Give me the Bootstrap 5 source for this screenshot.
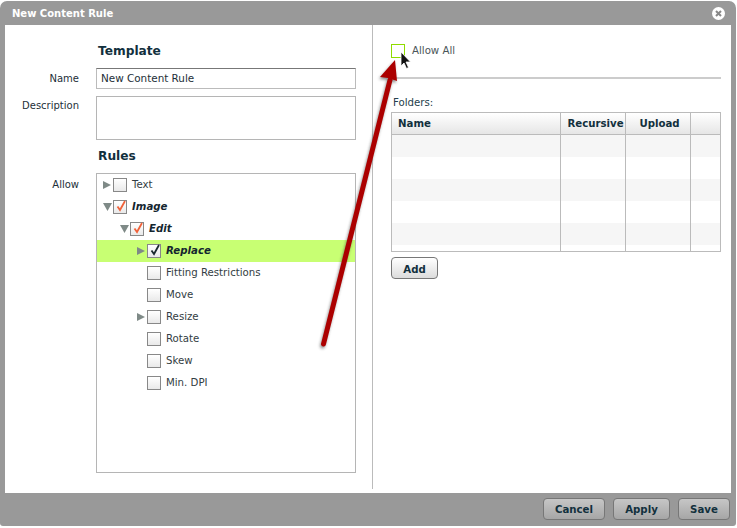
<!DOCTYPE html>
<html lang="en">
<head>
<meta charset="utf-8">
<title>New Content Rule</title>
<link href="https://cdn.jsdelivr.net/npm/bootstrap@5.3.0/dist/css/bootstrap.min.css" rel="stylesheet">
<style>
html,body{background:#fff;margin:0;height:528px;overflow:hidden}
body{font-family:"DejaVu Sans",Verdana,sans-serif;font-size:10.2px;color:#1d2f38;position:relative}
.dlg{width:736px;height:525px;margin-top:1px;background:#999;border-radius:7px 7px 3px 3px;display:flex;flex-direction:column}
.dlg-title{height:24px;padding:0 11px 0 12px;color:#fff;font-weight:700;font-size:10px}
.dlg-x{width:13px;height:13px}
.dlg-body{height:468px;margin:0 5px;background:#fff}
.pane-l{width:368px;height:464px;border-right:1px solid #bbb;padding:18px 16px 0 0}
.pane-r{width:358px;padding:19px 10px 0 18px}
.lab-col{width:91px;text-align:right;padding-right:17px;flex:none;font-size:10px}
.h-sec{font-size:12.2px;font-weight:700;color:#12303d;margin:0 0 9px 2px;padding-top:1px;line-height:15px}
.fld-gap{margin-bottom:7px}
.lab-top{padding-top:2px}
.sec-gap{margin-top:8px}
.lab-allow{padding-top:4px}
.fld{width:260px;height:21px;border:1px solid #bbb;border-top-color:#777;padding:0 4px;font-size:10.4px;color:#1d2f38;line-height:19px}
.fld-area{width:260px;height:44px;border:1px solid #b5b5b5}
.tree{width:260px;height:300px;border:1px solid #b5b5b5}
.tree-row{height:22px;color:#333d42;white-space:nowrap}
.tree-row.sel{background:#c8ff73}
.tree-row.b{font-weight:700;font-style:italic;color:#14262f}
.d1{padding-left:6px}.d2{padding-left:23px}.d3{padding-left:40px}
.tw{width:10px;height:10px;flex:none}
.cb{width:14px;height:14px;flex:none;border:1px solid #888;background:linear-gradient(#fff,#e9e9e9);margin-right:5px;position:relative}
.cb svg{position:absolute;left:1px;top:-2px}
.cb-all{border:1px solid #8fdc00;background:#fff;margin-right:7px}
.all-txt{color:#4a5559;margin-top:-1px}
.rule{border:0;border-top:2px solid #ccc;margin:19px 0 16px 2px;opacity:1;width:328px}
.fold-lab{margin-left:2px;padding-top:1px;line-height:14px;height:15px;color:#24404c}
.grid-box{width:330px;height:140px;margin-top:2px;border:1px solid #bbb;overflow:hidden}
.grid-head{height:22px;background:linear-gradient(#fff,#e6e6e6);border-bottom:1px solid #bbb;font-weight:700;color:#12303d}
.grid-row{height:22px}
.grid-row:nth-child(odd){background:#f6f6f6}
.grid-row.last{height:7px;background:#fff}
.c1{width:169px;padding-left:6px;border-right:1px solid #bbb;height:100%;line-height:21px}
.c2{width:65px;text-align:center;border-right:1px solid #bbb;height:100%;line-height:21px;white-space:nowrap;padding-left:5px}
.c3{width:65px;text-align:center;border-right:1px solid #bbb;height:100%;line-height:21px;padding-left:3px}
.c4{flex:1;height:100%}
.gbtn{font:700 10.2px "DejaVu Sans",Verdana,sans-serif;color:#12303d;border:1px solid #777;border-radius:4px;background:linear-gradient(#fff,#dcdcdc);padding:1px 0 0;height:22px;line-height:19px}
.gbtn-add{width:47px;margin-top:5px;padding-top:3px;line-height:17px}
.dlg-foot{height:33px;padding:5px 6px 0 0;gap:8px}
.gbtn-foot{height:22px;background:linear-gradient(#c6c6c6,#a6a6a6);border-color:#777;border-radius:4px}
.w-cancel{width:62px}.w-apply{width:57px}.w-save{width:52px}
.overlay{position:absolute;left:0;top:0;pointer-events:none}
</style>
</head>
<body>
<div class="dlg">
  <div class="dlg-title d-flex align-items-center justify-content-between">
    <span>New Content Rule</span>
    <svg class="dlg-x" viewBox="0 0 13 13"><circle cx="6.5" cy="6.500" r="6.500" fill="#fff"/><path d="M4 4l5 5M9 4l-5 5" stroke="#888" stroke-width="2"/></svg>
  </div>
  <div class="dlg-body d-flex">
    <div class="pane-l">
      <div class="d-flex"><div class="lab-col"></div><div class="h-sec">Template</div></div>
      <div class="d-flex align-items-center fld-gap"><div class="lab-col">Name</div><div class="fld">New Content Rule</div></div>
      <div class="d-flex"><div class="lab-col lab-top">Description</div><div class="fld-area"></div></div>
      <div class="d-flex sec-gap"><div class="lab-col"></div><div class="h-sec">Rules</div></div>
      <div class="d-flex">
        <div class="lab-col lab-allow">Allow</div>
        <div class="tree">
          <div class="tree-row d-flex align-items-center d1"><svg class="tw" viewBox="0 0 10 10"><path d="M0 1l8 4-8 4z" fill="#7f8a87"/></svg><span class="cb"></span><span>Text</span></div>
          <div class="tree-row b d-flex align-items-center d1"><svg class="tw" viewBox="0 0 10 10"><path d="M0 1h9l-4.500 8z" fill="#7f8a87"/></svg><span class="cb"><svg width="13" height="14" viewBox="0 0 13 14"><path d="M2.500 7.500l2.500 3.500 5-9" fill="none" stroke="#f0623a" stroke-width="1.800"/></svg></span><span>Image</span></div>
          <div class="tree-row b d-flex align-items-center d2"><svg class="tw" viewBox="0 0 10 10"><path d="M0 1h9l-4.500 8z" fill="#7f8a87"/></svg><span class="cb"><svg width="13" height="14" viewBox="0 0 13 14"><path d="M2.500 7.500l2.500 3.500 5-9" fill="none" stroke="#f0623a" stroke-width="1.800"/></svg></span><span>Edit</span></div>
          <div class="tree-row sel b d-flex align-items-center d3"><svg class="tw" viewBox="0 0 10 10"><path d="M0 1l8 4-8 4z" fill="#7f8a87"/></svg><span class="cb"><svg width="13" height="14" viewBox="0 0 13 14"><path d="M2.500 7.500l2.500 3.500 5-9" fill="none" stroke="#1b2a30" stroke-width="1.800"/></svg></span><span>Replace</span></div>
          <div class="tree-row d-flex align-items-center d3"><span class="tw"></span><span class="cb"></span><span>Fitting Restrictions</span></div>
          <div class="tree-row d-flex align-items-center d3"><span class="tw"></span><span class="cb"></span><span>Move</span></div>
          <div class="tree-row d-flex align-items-center d3"><svg class="tw" viewBox="0 0 10 10"><path d="M0 1l8 4-8 4z" fill="#7f8a87"/></svg><span class="cb"></span><span>Resize</span></div>
          <div class="tree-row d-flex align-items-center d3"><span class="tw"></span><span class="cb"></span><span>Rotate</span></div>
          <div class="tree-row d-flex align-items-center d3"><span class="tw"></span><span class="cb"></span><span>Skew</span></div>
          <div class="tree-row d-flex align-items-center d3"><span class="tw"></span><span class="cb"></span><span>Min. DPI</span></div>
        </div>
      </div>
    </div>
    <div class="pane-r">
      <div class="d-flex align-items-center"><span class="cb cb-all"></span><span class="all-txt">Allow All</span></div>
      <hr class="rule">
      <div class="fold-lab">Folders:</div>
      <div class="grid-box">
        <div class="grid-head d-flex align-items-center"><div class="c1">Name</div><div class="c2">Recursive</div><div class="c3">Upload</div><div class="c4"></div></div>
        <div>
          <div class="grid-row d-flex"><div class="c1"></div><div class="c2"></div><div class="c3"></div><div class="c4"></div></div>
          <div class="grid-row d-flex"><div class="c1"></div><div class="c2"></div><div class="c3"></div><div class="c4"></div></div>
          <div class="grid-row d-flex"><div class="c1"></div><div class="c2"></div><div class="c3"></div><div class="c4"></div></div>
          <div class="grid-row d-flex"><div class="c1"></div><div class="c2"></div><div class="c3"></div><div class="c4"></div></div>
          <div class="grid-row d-flex"><div class="c1"></div><div class="c2"></div><div class="c3"></div><div class="c4"></div></div>
          <div class="grid-row last d-flex"><div class="c1"></div><div class="c2"></div><div class="c3"></div><div class="c4"></div></div>
        </div>
      </div>
      <button type="button" class="btn gbtn gbtn-add">Add</button>
    </div>
  </div>
  <div class="dlg-foot d-flex justify-content-end">
    <button type="button" class="btn gbtn gbtn-foot w-cancel">Cancel</button>
    <button type="button" class="btn gbtn gbtn-foot w-apply">Apply</button>
    <button type="button" class="btn gbtn gbtn-foot w-save">Save</button>
  </div>
</div>
<svg class="overlay" width="737" height="528" viewBox="0 0 737 528">
  <defs><filter id="sh" x="-20%" y="-20%" width="140%" height="140%"><feGaussianBlur stdDeviation="1.500"/></filter></defs>
  <g filter="url(#sh)" opacity=".55" transform="translate(-1,2)"><path d="M323.500 344L390 80" stroke="#333" stroke-width="5" stroke-linecap="round"/><path d="M380 77L395 60 397 81 388 78z" fill="#333"/></g>
  <path d="M323.500 344L390 80" stroke="#ac0000" stroke-width="5" stroke-linecap="round"/>
  <path d="M380 77L395 60 397 81 388 78z" fill="#ac0000"/>
  <path d="M401 52v14l3-3 2.500 5.500 2-1-2.500-5.500 4.500 0z" fill="#111" stroke="#fff" stroke-width=".8"/>
</svg>
</body>
</html>
